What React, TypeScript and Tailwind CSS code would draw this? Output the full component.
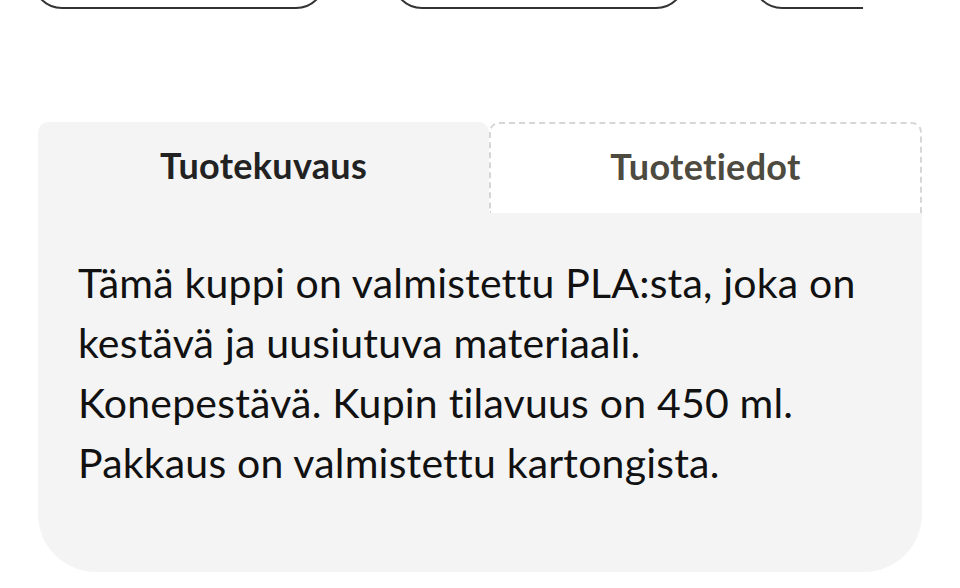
import React from "react";

export default function App() {
  return (
    <div className="h-[588px] w-[960px] overflow-hidden bg-white font-['Lato',sans-serif] [font-variant-ligatures:none]">
      {/* pill buttons, only their bottoms peek in at the top */}
      <div className="flex h-[9px] w-[863px] items-end gap-[66px] overflow-hidden pl-[32px]">
        <div className="h-[60px] w-[294px] shrink-0 rounded-[30px] border-2 border-[#333]" />
        <div className="h-[60px] w-[294px] shrink-0 rounded-[30px] border-2 border-[#333]" />
        <div className="h-[60px] w-[294px] shrink-0 rounded-[30px] border-2 border-[#333]" />
      </div>

      <div className="ml-[38px] mt-[113px] w-[884px]">
        <div className="flex h-[91px]">
          <button
            type="button"
            className="flex w-[451px] items-center justify-center rounded-t-[10px] bg-[#f4f4f4] pb-[6px] text-[36px] font-bold tracking-[0.3px] text-[#222]"
          >
            Tuotekuvaus
          </button>
          <button
            type="button"
            className="flex flex-1 items-center justify-center rounded-t-[10px] border-2 border-b-0 border-dashed border-[#d6d6d6] bg-white pb-[6px] text-[36px] font-bold tracking-[0.3px] text-[#4d4a40]"
          >
            Tuotetiedot
          </button>
        </div>
        <div className="h-[359px] rounded-b-[58px] bg-[#f4f4f4] px-[40px] pt-[40px]">
          <p className="whitespace-nowrap text-[41px] leading-[60px] tracking-[0.2px] text-[#111]">
            Tämä kuppi on valmistettu PLA:sta, joka on
            <br />
            kestävä ja uusiutuva materiaali.
            <br />
            Konepestävä. Kupin tilavuus on 450 ml.
            <br />
            Pakkaus on valmistettu kartongista.
          </p>
        </div>
      </div>
    </div>
  );
}
